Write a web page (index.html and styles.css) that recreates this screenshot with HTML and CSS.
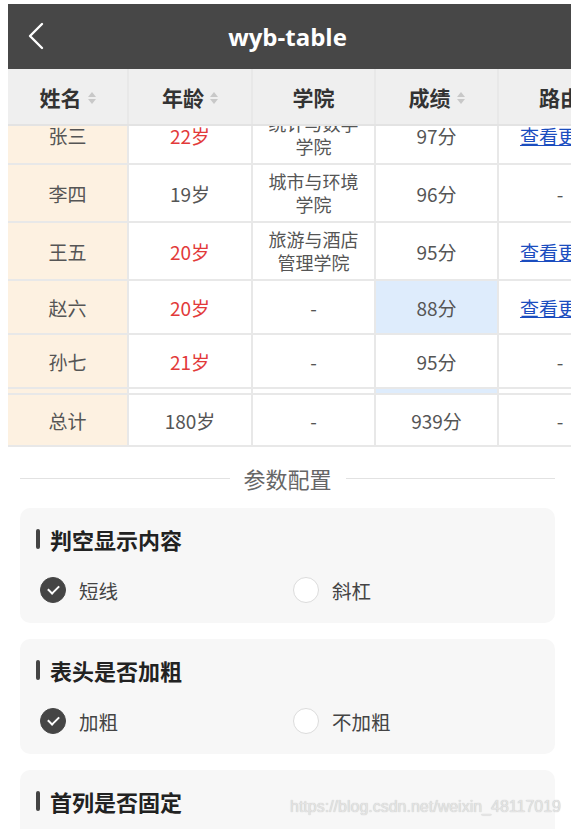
FILE: index.html
```html
<!DOCTYPE html>
<html lang="zh-CN">
<head>
    <meta charset="UTF-8">
    <meta name="viewport" content="width=device-width, initial-scale=1.0">
    <title>wyb-table</title>
    <link rel="stylesheet" href="styles.css">
</head>
<body>
  <div class="page">
    <div class="navbar">
      <svg class="back" width="20" height="28" viewBox="0 0 20 28">
        <path d="M15 2 L3 14 L15 26" fill="none" stroke="#fff" stroke-width="2.4" stroke-linecap="round" stroke-linejoin="round"/>
      </svg>
      <span class="nav-title">wyb-table</span>
    </div>

    <div class="table">
      <div class="row head">
        <div class="cell first">姓名<i class="sort"></i></div>
        <div class="cell">年龄<i class="sort"></i></div>
        <div class="cell">学院</div>
        <div class="cell">成绩<i class="sort"></i></div>
        <div class="cell">路由</div>
      </div>

      <div class="scroll">
        <div class="scroll-inner">
          <div class="row tall">
            <div class="cell first">张三</div>
            <div class="cell red">22岁</div>
            <div class="cell wrap">统计与数学<br>学院</div>
            <div class="cell">97分</div>
            <div class="cell"><a href="#" class="link">查看更多</a></div>
          </div>
          <div class="row tall">
            <div class="cell first">李四</div>
            <div class="cell">19岁</div>
            <div class="cell wrap">城市与环境<br>学院</div>
            <div class="cell">96分</div>
            <div class="cell">-</div>
          </div>
          <div class="row tall">
            <div class="cell first">王五</div>
            <div class="cell red">20岁</div>
            <div class="cell wrap">旅游与酒店<br>管理学院</div>
            <div class="cell">95分</div>
            <div class="cell"><a href="#" class="link">查看更多</a></div>
          </div>
          <div class="row">
            <div class="cell first">赵六</div>
            <div class="cell red">20岁</div>
            <div class="cell">-</div>
            <div class="cell active">88分</div>
            <div class="cell"><a href="#" class="link">查看更多</a></div>
          </div>
          <div class="row">
            <div class="cell first">孙七</div>
            <div class="cell red">21岁</div>
            <div class="cell">-</div>
            <div class="cell">95分</div>
            <div class="cell">-</div>
          </div>
          <div class="row">
            <div class="cell first">周八</div>
            <div class="cell">19岁</div>
            <div class="cell">-</div>
            <div class="cell active">88分</div>
            <div class="cell">-</div>
          </div>
        </div>
      </div>

      <div class="row foot">
        <div class="cell first">总计</div>
        <div class="cell">180岁</div>
        <div class="cell">-</div>
        <div class="cell">939分</div>
        <div class="cell">-</div>
      </div>
    </div>

    <div class="config">
      <div class="divider"><span>参数配置</span></div>

      <div class="card">
        <div class="card-title">判空显示内容</div>
        <div class="options">
          <div class="option checked"><i class="radio"></i>短线</div>
          <div class="option"><i class="radio"></i>斜杠</div>
        </div>
      </div>

      <div class="card">
        <div class="card-title">表头是否加粗</div>
        <div class="options">
          <div class="option checked"><i class="radio"></i>加粗</div>
          <div class="option"><i class="radio"></i>不加粗</div>
        </div>
      </div>

      <div class="card">
        <div class="card-title">首列是否固定</div>
        <div class="options">
          <div class="option checked"><i class="radio"></i>固定</div>
          <div class="option"><i class="radio"></i>不固定</div>
        </div>
      </div>
    </div>

    <div class="watermark">https://blog.csdn.net/weixin_48117019</div>
  </div>
</body>
</html>
```

FILE: styles.css
```css
html, body{
  margin: 0;
  overflow: hidden;
}
body{
  padding: 4px 0 0 8px;
  font-family: "Noto Sans CJK SC", "Noto Sans", sans-serif;
  color: #555;
  background: #fff;
}
.page{
  position: relative;
  height: 825px;
  overflow: hidden;
}

/* nav bar */
.navbar{
  height: 65px;
  background-color: #474747;
  display: flex;
  align-items: center;
  justify-content: center;
  position: relative;
}
.navbar .back{
  position: absolute;
  left: 19px;
  top: 18px;
}
.nav-title{
  color: #fff;
  font-family: "Open Sans", "Noto Sans", sans-serif;
  font-weight: 700;
  font-size: 24px;
  margin-right: 4px;
}

/* table */
.table{
  overflow: hidden;
}
.row{
  display: grid;
  grid-template-columns: 121px 124px 123px 123px 124px;
  min-height: 54px;
  box-sizing: border-box;
  border-bottom: 2px solid #e8e8e8;
}
.row.tall{
  min-height: 58px;
}
.cell{
  display: flex;
  align-items: center;
  justify-content: center;
  text-align: center;
  font-size: 19px;
  color: #555;
  border-right: 2px solid #e8e8e8;
  line-height: 23px;
  padding: 4px 0;
}
.cell.first{
  background-color: #fdf1e1;
}
.cell.red{
  color: #e23a3a;
}
.cell.active{
  background-color: #deecfc;
}
.cell.wrap{
  font-size: 18px;
}
.link{
  color: #1b4dbf;
  text-decoration: underline;
  white-space: nowrap;
  margin-left: -4px;
}
.row.head{
  height: 57px;
  background-color: #efefef;
  border-bottom: 2px solid #e3e3e3;
}
.row.head .cell{
  background-color: #efefef;
  font-size: 21px;
  font-weight: 700;
  color: #333;
  padding-top: 6px;
}
.sort{
  display: inline-flex;
  flex-direction: column;
  gap: 2px;
  margin-left: 6px;
}
.sort::before, .sort::after{
  content: "";
  border-left: 4px solid transparent;
  border-right: 4px solid transparent;
}
.sort::before{
  border-bottom: 5px solid #c8c8c8;
}
.sort::after{
  border-top: 5px solid #c8c8c8;
}
.scroll{
  height: 267px;
  overflow: hidden;
}
.scroll-inner{
  margin-top: -19px;
}
.row.foot{
  border-top: 2px solid #e8e8e8;
}

/* config */
.config{
  margin: 0 16px 0 12px;
}
.divider{
  display: flex;
  align-items: center;
  gap: 14px;
  margin: 16px 0 15px;
  font-size: 22px;
  color: #666;
  height: 30px;
}
.divider::before, .divider::after{
  content: "";
  flex: 1;
  border-top: 1px solid #e2e2e2;
}
.card{
  background-color: #f7f7f7;
  border-radius: 10px;
  padding: 17px 20px 18px;
  margin-bottom: 16px;
}
.card-title{
  display: flex;
  align-items: center;
  font-size: 22px;
  font-weight: 700;
  color: #222;
  line-height: 28px;
}
.card-title::before{
  content: "";
  width: 4px;
  height: 20px;
  border-radius: 2px;
  background-color: #444;
  margin: 0 10px 0 -4px;
}
.options{
  display: grid;
  grid-template-columns: 253px 1fr;
  margin-top: 22px;
}
.option{
  display: flex;
  align-items: center;
  font-size: 19.5px;
  color: #444;
  height: 30px;
}
.radio{
  width: 26px;
  height: 26px;
  box-sizing: border-box;
  border-radius: 50%;
  border: 1px solid #dcdcdc;
  background-color: #fff;
  margin-right: 13px;
  display: flex;
  align-items: center;
  justify-content: center;
}
.option.checked .radio{
  background-color: #454545;
  border-color: #454545;
}
.option.checked .radio::after{
  content: "";
  width: 9px;
  height: 5px;
  border-left: 2.5px solid #fff;
  border-bottom: 2.5px solid #fff;
  transform: translateY(-2px) rotate(-45deg);
}

.watermark{
  position: absolute;
  left: 282px;
  top: 794px;
  font-family: "Liberation Sans", sans-serif;
  font-size: 16px;
  color: #e4e4e4;
  text-shadow: 0 0 1px #b8b8b8;
}
```
